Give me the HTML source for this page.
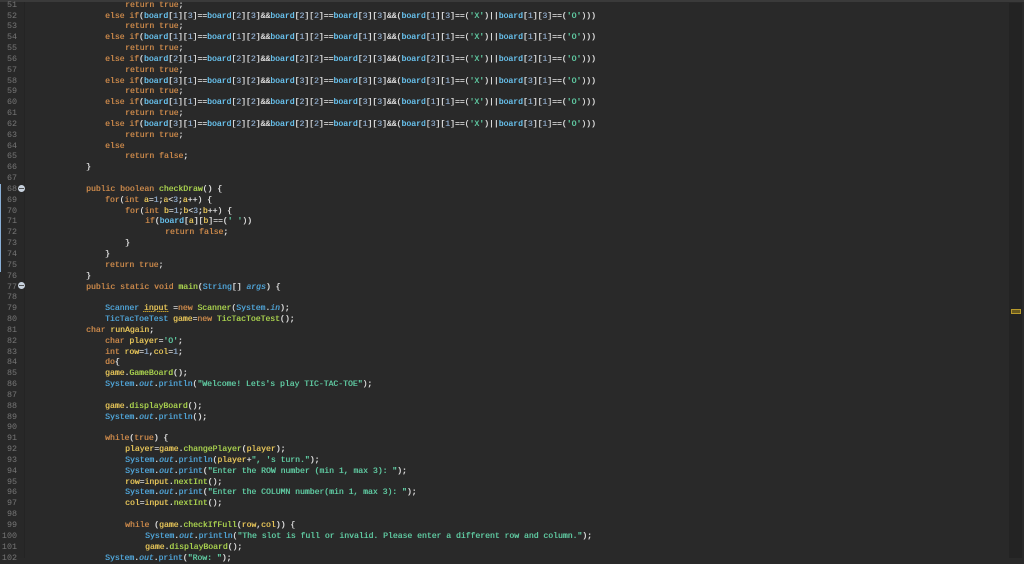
<!DOCTYPE html>
<html><head><meta charset="utf-8"><style>
html,body{margin:0;padding:0;}
body{width:1024px;height:558px;background:#292929;overflow:hidden;position:relative;font-family:"Liberation Mono",monospace;font-size:8.1px;}
.top{position:absolute;left:0;top:0;width:1024px;height:2px;background:#3a3a3a;}
.gut{position:absolute;left:0;top:2px;width:24px;height:556px;background:#282828;border-right:1px solid #242424;}
.ruler{position:absolute;left:1009px;top:3px;width:13px;height:555px;background:#232323;}
.mark{position:absolute;left:1011px;top:309px;width:8px;height:3px;border:1px solid #b89a2c;background:#6a5a1e;}
.ln{position:absolute;left:0;width:17px;text-align:right;color:#767676;line-height:11px;font-size:8.4px;}
.c{position:absolute;white-space:pre;line-height:11px;color:#dadada;text-shadow:0.35px 0 0 currentColor;}
.k{color:#c8874a}.b{color:#68c2ee}.n{color:#8aa4c2}.s{color:#5fc8a0}.m{color:#a8d04e}.t{color:#4fa2d4}.v{color:#e3c258}.i{font-style:italic}.w{color:#e8e8e8}
.fold{position:absolute;left:18px;width:7px;height:7px;border-radius:50%;background:#c8d2de;}
.fold:after{content:"";position:absolute;left:1px;top:3px;width:5px;height:1px;background:#555;}
.lb{position:absolute;left:0;width:1px;background:#8ab0d8;}
</style></head><body>
<div class="top"></div>
<div class="gut"></div>
<div class="ruler"></div><div class="mark"></div>
<div class="lb" style="top:184px;height:88px"></div>
<div class="fold" style="top:185px"></div>
<div class="fold" style="top:282px"></div>
<div id="r"></div>
<script>
const L=[
[51,125,'<span class="k">return true</span>;'],
[52,105,'X13 23 22 33 13'],
[53,125,'R'],
[54,105,'X11 12 12 13 11'],
[55,125,'R'],
[56,105,'X21 22 22 23 21'],
[57,125,'R'],
[58,105,'X31 32 32 33 31'],
[59,125,'R'],
[60,105,'X11 22 22 33 11'],
[61,125,'R'],
[62,105,'X31 22 22 13 31'],
[63,125,'R'],
[64,105,'<span class="k">else</span>'],
[65,125,'<span class="k">return false</span>;'],
[66,86,'}'],
[67,0,''],
[68,86,'<span class="k">public boolean</span> <span class="m">checkDraw</span>() {'],
[69,105,'<span class="k">for</span>(<span class="k">int</span> <span class="v">a</span>=<span class="n">1</span>;<span class="v">a</span>&lt;<span class="n">3</span>;<span class="v">a</span>++) {'],
[70,125,'<span class="k">for</span>(<span class="k">int</span> <span class="v">b</span>=<span class="n">1</span>;<span class="v">b</span>&lt;<span class="n">3</span>;<span class="v">b</span>++) {'],
[71,145,'<span class="k">if</span>(<span class="b">board</span>[<span class="v">a</span>][<span class="v">b</span>]==(<span class="s">\' \'</span>))'],
[72,165,'<span class="k">return false</span>;'],
[73,125,'}'],
[74,105,'}'],
[75,105,'<span class="k">return true</span>;'],
[76,86,'}'],
[77,86,'<span class="k">public static void</span> <span class="m">main</span>(<span class="t">String</span>[] <span class="t i">args</span>) {'],
[78,0,''],
[79,105,'<span class="t">Scanner</span> <span class="v" style="text-decoration:underline dotted #c8a020">input</span> =<span class="k">new</span> <span class="m">Scanner</span>(<span class="t">System</span>.<span class="t i">in</span>);'],
[80,105,'<span class="t">TicTacToeTest</span> <span class="v">game</span>=<span class="k">new</span> <span class="m">TicTacToeTest</span>();'],
[81,86,'<span class="k">char</span> <span class="v">runAgain</span>;'],
[82,105,'<span class="k">char</span> <span class="v">player</span>=<span class="s">\'O\'</span>;'],
[83,105,'<span class="k">int</span> <span class="v">row</span>=<span class="n">1</span>,<span class="v">col</span>=<span class="n">1</span>;'],
[84,105,'<span class="k">do</span>{'],
[85,105,'<span class="v">game</span>.<span class="m">GameBoard</span>();'],
[86,105,'P<span class="t">println</span>(<span class="s">"Welcome! Lets\'s play TIC-TAC-TOE"</span>);'],
[87,0,''],
[88,105,'<span class="v">game</span>.<span class="m">displayBoard</span>();'],
[89,105,'P<span class="t">println</span>();'],
[90,0,''],
[91,105,'<span class="k">while</span>(<span class="k">true</span>) {'],
[92,125,'<span class="v">player</span>=<span class="v">game</span>.<span class="m">changePlayer</span>(<span class="v">player</span>);'],
[93,125,'P<span class="t">println</span>(<span class="v">player</span>+<span class="s">", \'s turn."</span>);'],
[94,125,'P<span class="t">print</span>(<span class="s">"Enter the ROW number (min 1, max 3): "</span>);'],
[95,125,'<span class="v">row</span>=<span class="v">input</span>.<span class="m">nextInt</span>();'],
[96,125,'P<span class="t">print</span>(<span class="s">"Enter the COLUMN number(min 1, max 3): "</span>);'],
[97,125,'<span class="v">col</span>=<span class="v">input</span>.<span class="m">nextInt</span>();'],
[98,0,''],
[99,125,'<span class="k">while</span> (<span class="v">game</span>.<span class="m">checkIfFull</span>(<span class="v">row</span>,<span class="v">col</span>)) {'],
[100,145,'P<span class="t">println</span>(<span class="s">"The slot is full or invalid. Please enter a different row and column."</span>);'],
[101,145,'<span class="v">game</span>.<span class="m">displayBoard</span>();'],
[102,105,'P<span class="t">print</span>(<span class="s">"Row: "</span>);']
];
function bd(x){return '<span class="b">board</span>[<span class="n">'+x[0]+'</span>][<span class="n">'+x[1]+'</span>]';}
let h='';
for(const [n,x,c0] of L){
 let c=c0;
 if(c[0]==='X'){const p=c.slice(1).split(' ');
  c='<span class="k">else if</span>('+bd(p[0])+'<span class="w">==</span>'+bd(p[1])+'&amp;&amp;'+bd(p[2])+'<span class="w">==</span>'+bd(p[3])+'&amp;&amp;('+bd(p[4])+'<span class="w">==</span>(<span class="s">\'X\'</span>)||'+bd(p[4])+'<span class="w">==</span>(<span class="s">\'O\'</span>)))';}
 else if(c==='R') c='<span class="k">return true</span>;';
 else if(c[0]==='P') c='<span class="t">System</span>.<span class="t i">out</span>.'+c.slice(1);
 const top=Math.round(16+(n-52)*10.84-5.5);
 h+='<div class="ln" style="top:'+top+'px">'+n+'</div>';
 if(c) h+='<div class="c" style="left:'+x+'px;top:'+top+'px">'+c+'</div>';
}
document.getElementById('r').innerHTML=h;
</script>
</body></html>
